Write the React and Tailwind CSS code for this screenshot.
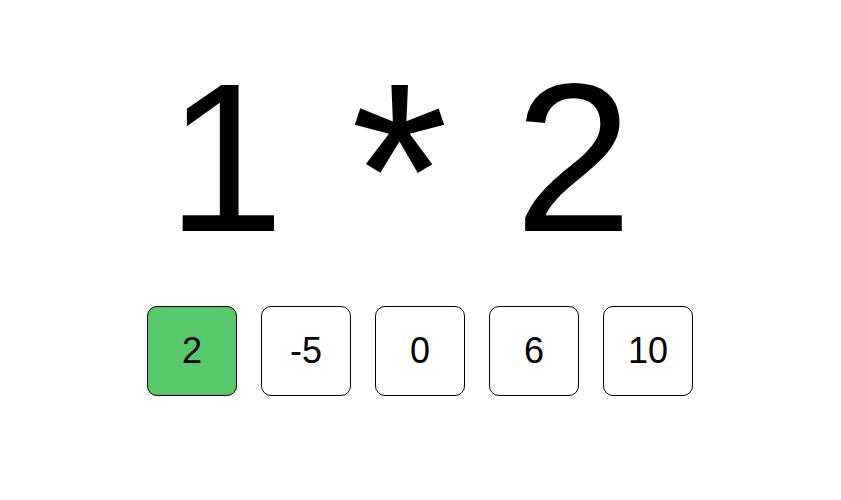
export default function App() {
  const opts = [
    { v: "2", active: true },
    { v: "-5" },
    { v: "0" },
    { v: "6" },
    { v: "10" },
  ];
  return (
    <div
      className="w-full h-[500px] bg-white flex flex-col items-center text-black"
      style={{ fontFamily: '"Liberation Sans", Arial, sans-serif' }}
    >
      <div className="mt-[52px] h-[212px] flex items-start leading-none text-[212px] pr-[42px]">
        <span className="block w-[118px]">1</span>
        <span className="block w-[60px]" />
        <span className="block w-[110px] text-[250px] leading-[190px] mt-[25px] text-center">*</span>
        <span className="block w-[60px]" />
        <span className="block w-[118px]">2</span>
      </div>
      <div className="mt-[42px] flex gap-[24px] pr-[1px]">
        {opts.map((o) => (
          <button
            key={o.v}
            className={`w-[90px] h-[90px] rounded-[10px] border border-black flex items-center justify-center text-[36px] leading-none ${
              o.active ? "bg-[#56c86c]" : "bg-white"
            }`}
            style={{ fontFamily: '"Liberation Sans", Arial, sans-serif' }}
          >
            {o.v}
          </button>
        ))}
      </div>
    </div>
  );
}
